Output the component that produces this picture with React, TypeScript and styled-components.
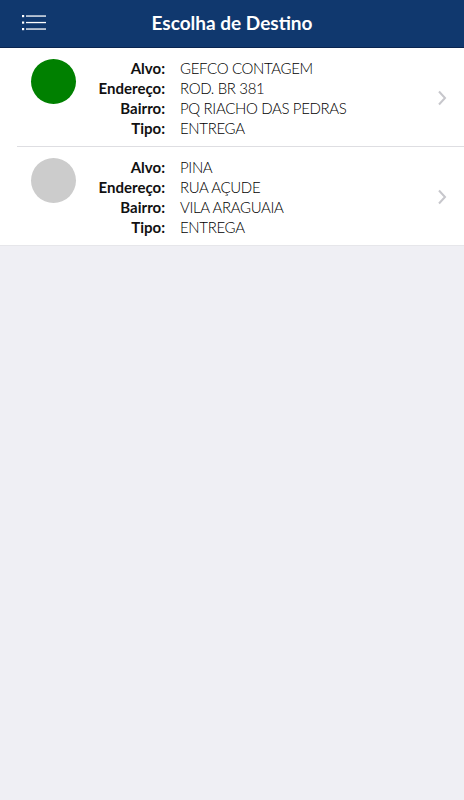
import React from "react";
import styled, { createGlobalStyle } from "styled-components";

const GlobalStyle = createGlobalStyle`
  html, body { margin: 0; padding: 0; background: #efeff4; }
  body { font-family: Lato, "Noto Sans", sans-serif; }
  * { box-sizing: border-box; }
`;

const Page = styled.div`
  min-height: 800px;
  background: #efeff4;
  display: flex;
  flex-direction: column;
`;

const Header = styled.header`
  height: 48px;
  background: #10386e;
  border-bottom: 1px solid #0a2550;
  display: flex;
  align-items: center;
  justify-content: center;
  position: relative;
`;

const MenuButton = styled.button`
  position: absolute;
  left: 21px;
  top: 13px;
  width: 28px;
  height: 22px;
  padding: 0;
  border: 0;
  background: transparent;
  display: flex;
`;

const Title = styled.h1`
  margin: 0;
  color: #fff;
  font-family: Lato, sans-serif;
  font-weight: 700;
  font-size: 19px;
  letter-spacing: 0;
  margin-top: -2px;
`;

const List = styled.ul`
  list-style: none;
  margin: 0;
  padding: 0;
  background: #fff;
  border-bottom: 1px solid #e6e6ea;
`;

const Item = styled.li<{ $last?: boolean }>`
  margin-left: 17px;
  padding: 10px 0 8px 14px;
  height: ${(p) => (p.$last ? 98 : 99)}px;
  display: flex;
  align-items: flex-start;
  border-bottom: ${(p) => (p.$last ? "none" : "1px solid #dedee2")};
`;

const Dot = styled.div<{ $color: string }>`
  width: 45px;
  height: 45px;
  border-radius: 50%;
  background: ${(p) => p.$color};
  margin-top: 1px;
  flex-shrink: 0;
`;

const Details = styled.dl`
  margin: 0;
  flex: 1;
  display: grid;
  grid-template-columns: 89px auto;
  column-gap: 15px;
  grid-auto-rows: 20px;
  align-items: center;
`;

const Label = styled.dt`
  text-align: right;
  font-weight: 700;
  font-size: 15px;
  color: #111;
  white-space: nowrap;
`;

const Value = styled.dd`
  margin: 0;
  font-size: 15px;
  font-weight: 300;
  letter-spacing: -0.35px;
  color: #000;
  white-space: nowrap;
`;

const Chevron = styled.div`
  width: 27px;
  align-self: center;
  display: flex;
  justify-content: flex-start;
`;

const MenuIcon = () => (
  <svg width="28" height="22" viewBox="0 0 28 22">
    {[3, 9.5, 16].map((y) => (
      <g key={y}>
        <rect x="1" y={y - 1} width="2.2" height="2.2" fill="#fff" />
        <rect x="5" y={y - 0.6} width="20" height="1.3" fill="#fff" />
      </g>
    ))}
  </svg>
);

const ChevronIcon = () => (
  <svg width="10" height="16" viewBox="0 0 10 16">
    <path d="M2 1.5 L8 8 L2 14.5" fill="none" stroke="#c7c7cc" strokeWidth="2" />
  </svg>
);

type Dest = { color: string; alvo: string; endereco: string; bairro: string; tipo: string };

const data: Dest[] = [
  { color: "#008000", alvo: "GEFCO CONTAGEM", endereco: "ROD. BR 381", bairro: "PQ RIACHO DAS PEDRAS", tipo: "ENTREGA" },
  { color: "#cccccc", alvo: "PINA", endereco: "RUA AÇUDE", bairro: "VILA ARAGUAIA", tipo: "ENTREGA" },
];

export default function App() {
  return (
    <Page>
      <GlobalStyle />
      <Header>
        <MenuButton aria-label="menu">
          <MenuIcon />
        </MenuButton>
        <Title>Escolha de Destino</Title>
      </Header>
      <List>
        {data.map((d, i) => (
          <Item key={i} $last={i === data.length - 1}>
            <Dot $color={d.color} />
            <Details>
              <Label>Alvo:</Label>
              <Value>{d.alvo}</Value>
              <Label>Endereço:</Label>
              <Value>{d.endereco}</Value>
              <Label>Bairro:</Label>
              <Value>{d.bairro}</Value>
              <Label>Tipo:</Label>
              <Value>{d.tipo}</Value>
            </Details>
            <Chevron>
              <ChevronIcon />
            </Chevron>
          </Item>
        ))}
      </List>
    </Page>
  );
}
